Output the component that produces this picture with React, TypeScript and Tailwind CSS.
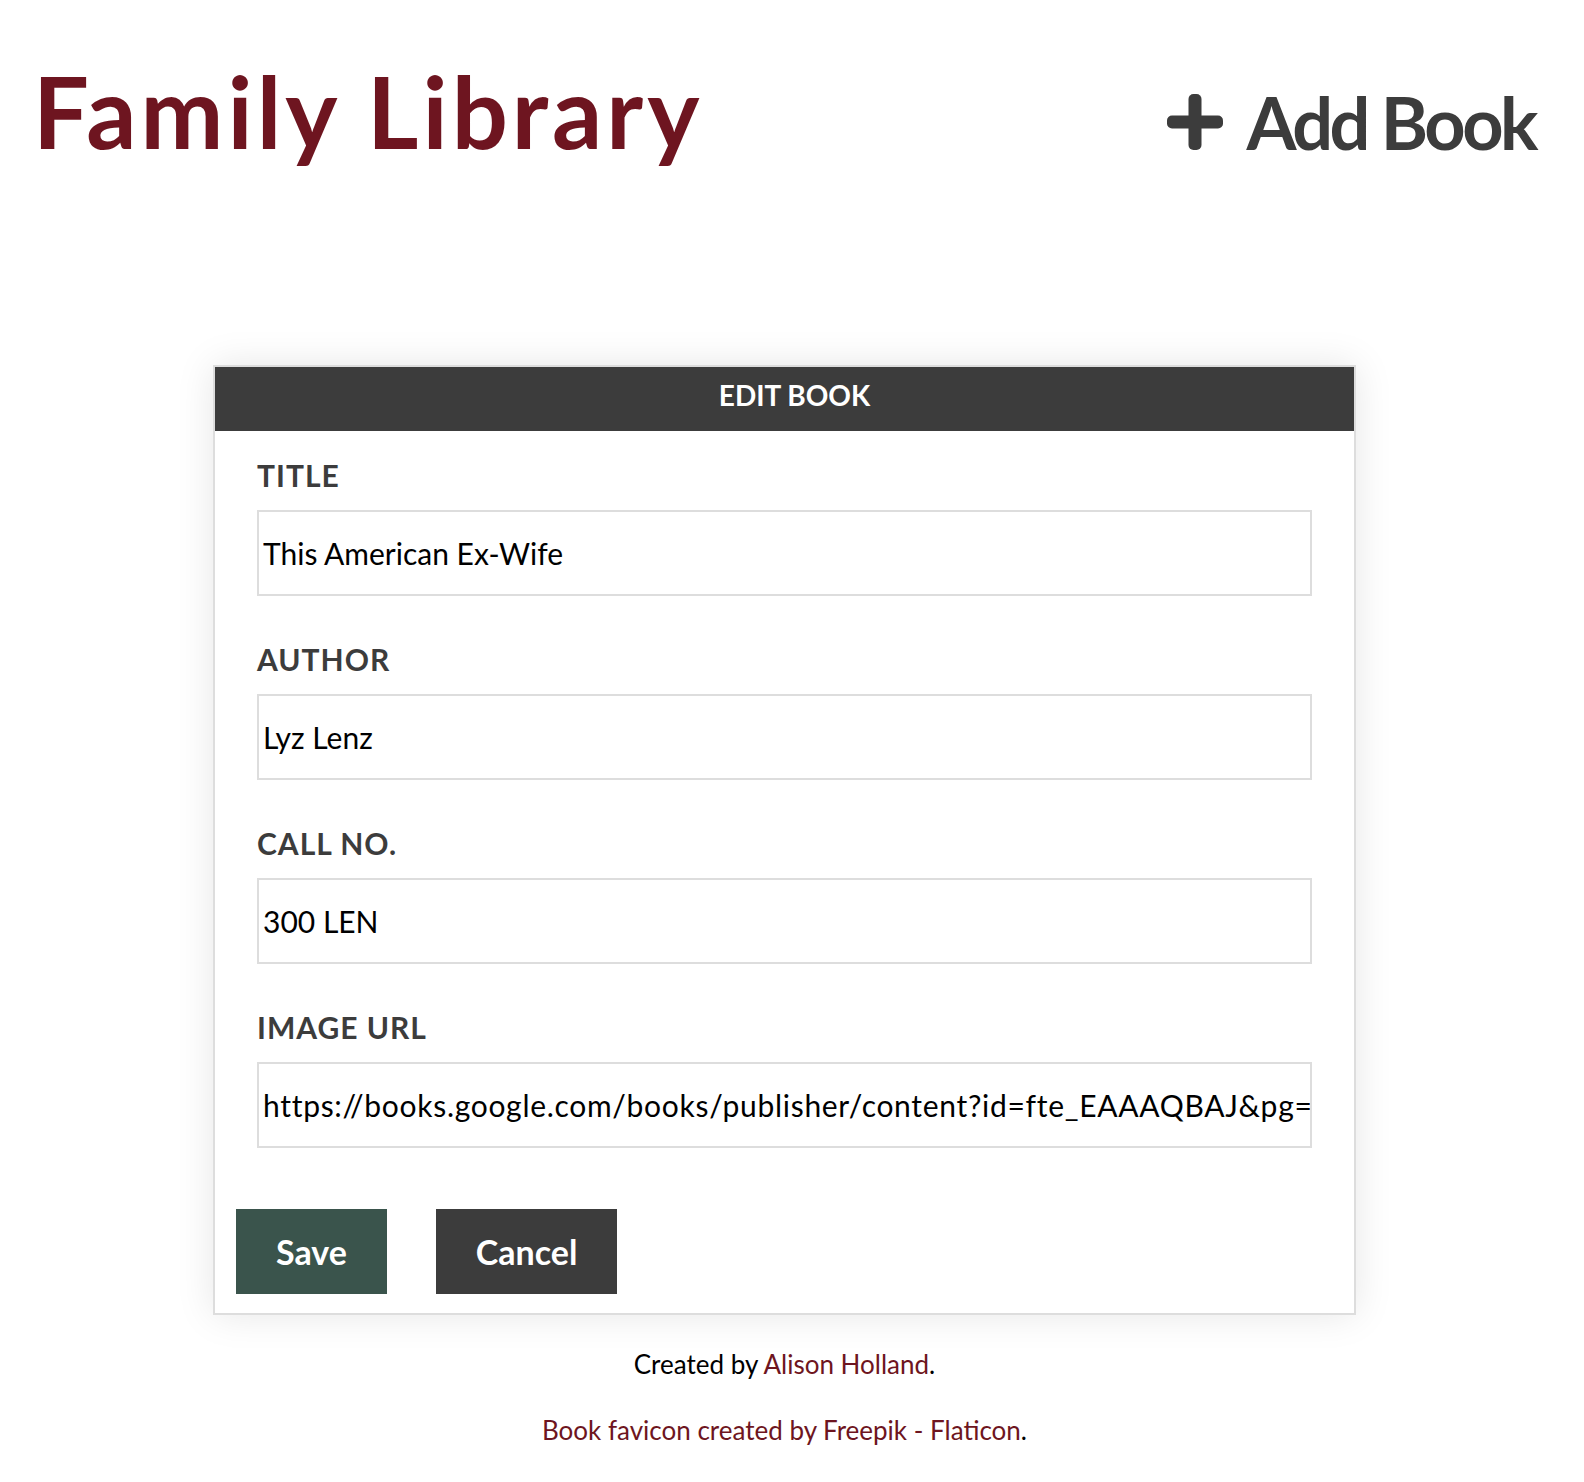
import React from "react";

const fields = [
  { label: "TITLE", value: "This American Ex-Wife", wide: false },
  { label: "AUTHOR", value: "Lyz Lenz", wide: false },
  { label: "CALL NO.", value: "300 LEN", wide: false },
  {
    label: "IMAGE URL",
    value:
      "https://books.google.com/books/publisher/content?id=fte_EAAAQBAJ&pg=PP1&img=1&zoom=3&hl=en&bul=1&sig=ACfU3U0",
    wide: true,
  },
];

const PlusIcon = () => (
  <svg width="56" height="56" viewBox="0 0 56 56" fill="#3c3c3c">
    <rect x="0" y="21.5" width="56" height="13" rx="5" />
    <rect x="21.5" y="0" width="13" height="56" rx="5" />
  </svg>
);

const App = () => {
  return (
    <div className="min-h-screen bg-white font-['Lato',sans-serif]">
      <div className="w-[1569px]">
        <header className="flex items-start justify-between pl-[33px] pr-[34px] pt-[61px]">
          <h1 className="text-[99px] font-bold leading-none tracking-[4px] text-[#6e1520]">
            Family Library
          </h1>
          <button className="mt-[25px] flex items-center gap-[23px] text-[72px] font-bold leading-none tracking-[-3.5px] text-[#3c3c3c]">
            <PlusIcon />
            <span>Add Book</span>
          </button>
        </header>

        <main className="mt-[205px] flex flex-col items-center">
          <div className="w-[1143px] border-2 border-[#dddddd] bg-white shadow-[0_0_36px_rgba(0,0,0,0.1)]">
            <div className="h-[64px] bg-[#3c3c3c] pl-[20px] pt-[14px] text-center text-[28px] font-bold leading-none text-white">
              EDIT BOOK
            </div>
            <form className="px-[21px] pb-[19px] pt-[29px]">
              <div className="flex flex-col gap-[48px] px-[21px]">
                {fields.map((f) => (
                  <label key={f.label} className="flex flex-col gap-[20px]">
                    <span className="text-[30px] font-bold leading-none tracking-[1px] text-[#3c3c3c]">
                      {f.label}
                    </span>
                    <input
                      type="text"
                      defaultValue={f.value}
                      className={
                        f.wide
                          ? "h-[86px] w-full border-2 border-[#dddddd] pl-[4px] text-[30px] tracking-[0.7px] text-black outline-none"
                          : "h-[86px] w-full border-2 border-[#dddddd] pl-[4px] text-[30px] text-black outline-none"
                      }
                    />
                  </label>
                ))}
              </div>
              <div className="mt-[61px] flex gap-[49px]">
                <button
                  type="button"
                  className="h-[85px] bg-[#3a544c] px-[40px] text-[34px] font-bold text-white"
                >
                  Save
                </button>
                <button
                  type="button"
                  className="h-[85px] bg-[#3c3c3c] px-[40px] text-[34px] font-bold text-white"
                >
                  Cancel
                </button>
              </div>
            </form>
          </div>

          <footer className="mt-[36px] flex flex-col items-center gap-[40px] pb-[40px] text-[26px] leading-none text-black">
            <p>
              Created by <a href="#" className="text-[#6e1520]">Alison Holland</a>.
            </p>
            <p>
              <a href="#" className="text-[#6e1520]">
                Book favicon created by Freepik - Flaticon
              </a>
              .
            </p>
          </footer>
        </main>
      </div>
    </div>
  );
};

export default App;
